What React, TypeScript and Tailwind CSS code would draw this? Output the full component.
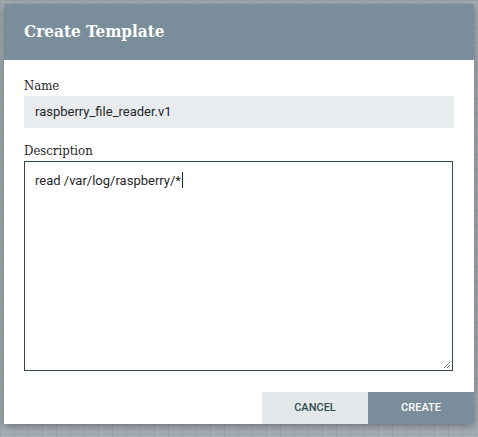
export default function App() {
  const description = 'read /var/log/raspberry/*'

  return (
    <div className="w-[478px] h-[437px] overflow-hidden bg-[#a6aeb3] bg-[linear-gradient(to_right,rgba(120,130,138,0.22)_1px,transparent_1px),linear-gradient(to_bottom,rgba(120,130,138,0.22)_1px,transparent_1px)] bg-[size:14px_14px] pt-[4px] pl-[4px]">
      <div className="w-[470px] h-[420px] bg-white flex flex-col shadow-[0_2px_8px_rgba(0,0,0,0.35)]">
        {/* header */}
        <div className="h-[56px] shrink-0 bg-[#7a8d9a] flex items-center px-5">
          <h1 className="text-white text-[17px] font-bold font-['DejaVu_Serif_Condensed','DejaVu_Serif',serif]">
            Create Template
          </h1>
        </div>

        {/* body */}
        <div className="px-5 pt-[16px] flex flex-col">
          <label className="h-[20px] leading-[20px] text-[13px] text-[#262626] font-['DejaVu_Serif_Condensed','DejaVu_Serif',serif]">
            Name
          </label>
          <div className="h-[32px] w-[430px] bg-[#e8ecef] flex items-center pl-[11px] text-[13px] text-[#262626] font-['Roboto',sans-serif]">
            raspberry_file_reader.v1
          </div>

          <label className="mt-[13px] h-[20px] leading-[20px] text-[13px] text-[#262626] font-['DejaVu_Serif_Condensed','DejaVu_Serif',serif]">
            Description
          </label>
          <div className="relative h-[210px] w-[429px] border border-[#2f4a4e] pl-[10px] pt-[9px] text-[13px] leading-[20px] text-[#262626] font-['Roboto',sans-serif]">
            <span>{description}</span>
            <span className="inline-block w-px h-[16px] bg-[#262626] align-[-3px] ml-px" />
            <svg
              className="absolute right-[1px] bottom-[1px]"
              width="9"
              height="9"
              viewBox="0 0 9 9"
            >
              <path d="M8 2 L2 8 M8 5 L5 8" stroke="#777" strokeWidth="1" />
            </svg>
          </div>
        </div>

        {/* footer */}
        <div className="mt-auto flex justify-end">
          <button className="w-[106px] h-[32px] bg-[#e3e8eb] text-[#2f4a4e] text-[11px] font-medium font-['Roboto',sans-serif] uppercase">
            Cancel
          </button>
          <button className="w-[106px] h-[32px] bg-[#7a8d9a] text-white text-[11px] font-medium font-['Roboto',sans-serif] uppercase">
            Create
          </button>
        </div>
      </div>
    </div>
  )
}
